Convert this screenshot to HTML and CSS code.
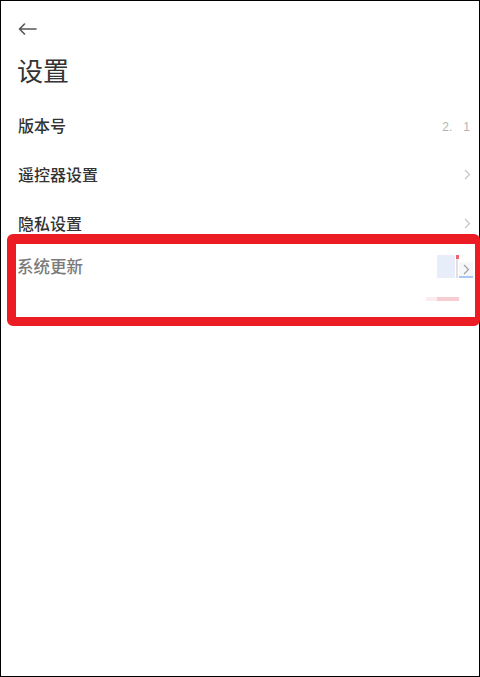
FILE: index.html
```html
<!DOCTYPE html>
<html lang="zh-CN">
<head>
<meta charset="utf-8">
<title>设置</title>
<link rel="stylesheet" href="styles.css">
</head>
<body>
<div class="screen">
  <div class="topbar">
    <svg class="back" width="20" height="12" viewBox="0 0 20 12" aria-label="返回">
      <path d="M19 6H2.5M7.5 1L2.5 6L7.5 11" fill="none" stroke="#555" stroke-width="1.6" stroke-linecap="round" stroke-linejoin="round"/>
    </svg>
  </div>
  <h1 class="title">设置</h1>
  <div class="list">
    <div class="row">
      <span class="label">版本号</span>
      <span class="value">2.<span class="gap"></span>1</span>
    </div>
    <div class="row">
      <span class="label">遥控器设置</span>
      <svg class="chev" width="7" height="11" viewBox="0 0 7 11"><path d="M1 1L5.5 5.5L1 10" fill="none" stroke="#c4c4c4" stroke-width="1.2"/></svg>
    </div>
    <div class="row">
      <span class="label">隐私设置</span>
      <svg class="chev" width="7" height="11" viewBox="0 0 7 11"><path d="M1 1L5.5 5.5L1 10" fill="none" stroke="#c4c4c4" stroke-width="1.2"/></svg>
    </div>
  </div>
  <div class="highlight">
    <span class="label dim">系统更新</span>
    <span class="art art-blue"></span>
    <span class="art art-red"></span>
    <span class="art art-line"></span>
    <span class="art art-chevbox">
      <svg width="7" height="11" viewBox="0 0 7 11"><path d="M1 1L5.5 5.5L1 10" fill="none" stroke="#a0a0a0" stroke-width="1.2"/></svg>
    </span>
    <span class="art art-pink1"></span>
    <span class="art art-pink2"></span>
  </div>
</div>
</body>
</html>
```
FILE: styles.css
```css
html, body {
  margin: 0;
  padding: 0;
  background: #fff;
}
body {
  font-family: "Noto Sans CJK SC", "Noto Sans", sans-serif;
}
.screen {
  width: 480px;
  height: 677px;
  box-sizing: border-box;
  border: 1px solid #000;
  background: #fff;
  overflow: visible;
}
.topbar {
  height: 10px;
  padding-top: 22px;
  padding-left: 16px;
  display: flex;
  align-items: flex-start;
}
.back {
  display: block;
}
.title {
  margin: 24px 0 0 16px;
  font-size: 26px;
  line-height: 26px;
  font-weight: 400;
  color: #333;
}
.list {
  margin-top: 19px;
  display: flex;
  flex-direction: column;
  gap: 15px;
}
.row {
  display: flex;
  align-items: flex-start;
  justify-content: space-between;
  padding: 14px 9px 2px 17px;
  height: 18px;
}
.label {
  font-size: 16px;
  line-height: 18px;
  font-weight: 500;
  color: #333;
}
.label.dim {
  color: #7a7a7a;
  font-size: 16.5px;
}
.value {
  font-family: "Liberation Sans", sans-serif;
  font-size: 12px;
  line-height: 18px;
  margin-top: 2px;
  color: #b3b3b3;
  display: flex;
}
.gap {
  display: inline-block;
  width: 11px;
}
.chev {
  display: block;
  margin-top: 4px;
  margin-right: -1px;
}
.highlight {
  position: relative;
  margin-left: 6px;
  margin-right: -1px;
  border-style: solid;
  border-color: #ec1c24;
  border-width: 10px 5px 9px 9px;
  border-radius: 6px;
  padding: 10px 0 0 1px;
  box-sizing: content-box;
  height: 63px;
}
.art {
  position: absolute;
  display: block;
}
.art-blue {
  left: 421px;
  top: 11px;
  width: 18px;
  height: 23px;
  background: #e7eefa;
}
.art-red {
  left: 440px;
  top: 11px;
  width: 3px;
  height: 4px;
  background: #f2616b;
}
.art-line {
  left: 440px;
  top: 15px;
  width: 2px;
  height: 19px;
  background: #e6dde1;
}
.art-chevbox {
  left: 443px;
  top: 18px;
  width: 14px;
  height: 14px;
  background: #f5f7fb;
  border-bottom: 2px solid #a9c8f2;
  display: flex;
  align-items: center;
  justify-content: center;
}
.art-chevbox svg {
  display: block;
}
.art-pink1 {
  left: 410px;
  top: 53px;
  width: 11px;
  height: 4px;
  background: #fbecee;
}
.art-pink2 {
  left: 421px;
  top: 53px;
  width: 22px;
  height: 4px;
  background: #f6cdd1;
}
```
